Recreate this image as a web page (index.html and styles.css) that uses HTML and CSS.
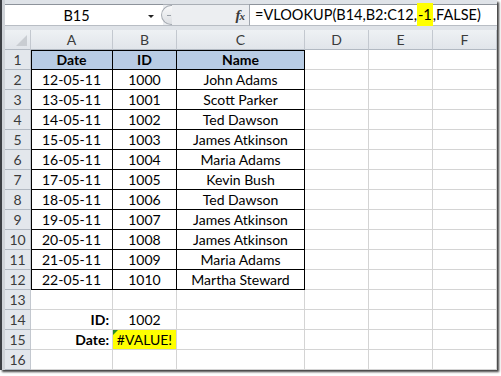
FILE: index.html
```html
<!DOCTYPE html>
<html>
<head>
<meta charset="utf-8">
<link rel="stylesheet" href="styles.css">
</head>
<body>
<div class="window">
  <div class="fbar">
    <div class="namebox"><span class="nb-text">B15</span><span class="nb-arrow"></span></div>
    <div class="pill"><span class="grip"><span class="dash"></span></span><span class="fx"><i>f</i><i class="fx-x">x</i></span></div>
    <div class="formula">=VLOOKUP(B14,B2:C12,<span class="hl">-1</span>,FALSE)</div>
  </div>
  <div class="grid">
    <div class="corner"><span class="tri"></span></div><div class="h">A</div><div class="h">B</div><div class="h">C</div><div class="h">D</div><div class="h">E</div><div class="h">F</div>

    <div class="rh">1</div><div class="c t th ta t1">Date</div><div class="c t th t1">ID</div><div class="c t th t1">Name</div><div class="c"></div><div class="c"></div><div class="c"></div>
    <div class="rh">2</div><div class="c t ta">12-05-11</div><div class="c t">1000</div><div class="c t">John Adams</div><div class="c"></div><div class="c"></div><div class="c"></div>
    <div class="rh">3</div><div class="c t ta">13-05-11</div><div class="c t">1001</div><div class="c t">Scott Parker</div><div class="c"></div><div class="c"></div><div class="c"></div>
    <div class="rh">4</div><div class="c t ta">14-05-11</div><div class="c t">1002</div><div class="c t">Ted Dawson</div><div class="c"></div><div class="c"></div><div class="c"></div>
    <div class="rh">5</div><div class="c t ta">15-05-11</div><div class="c t">1003</div><div class="c t">James Atkinson</div><div class="c"></div><div class="c"></div><div class="c"></div>
    <div class="rh">6</div><div class="c t ta">16-05-11</div><div class="c t">1004</div><div class="c t">Maria Adams</div><div class="c"></div><div class="c"></div><div class="c"></div>
    <div class="rh">7</div><div class="c t ta">17-05-11</div><div class="c t">1005</div><div class="c t">Kevin Bush</div><div class="c"></div><div class="c"></div><div class="c"></div>
    <div class="rh">8</div><div class="c t ta">18-05-11</div><div class="c t">1006</div><div class="c t">Ted Dawson</div><div class="c"></div><div class="c"></div><div class="c"></div>
    <div class="rh">9</div><div class="c t ta">19-05-11</div><div class="c t">1007</div><div class="c t">James Atkinson</div><div class="c"></div><div class="c"></div><div class="c"></div>
    <div class="rh">10</div><div class="c t ta">20-05-11</div><div class="c t">1008</div><div class="c t">James Atkinson</div><div class="c"></div><div class="c"></div><div class="c"></div>
    <div class="rh">11</div><div class="c t ta">21-05-11</div><div class="c t">1009</div><div class="c t">Maria Adams</div><div class="c"></div><div class="c"></div><div class="c"></div>
    <div class="rh">12</div><div class="c t ta">22-05-11</div><div class="c t">1010</div><div class="c t">Martha Steward</div><div class="c"></div><div class="c"></div><div class="c"></div>
    <div class="rh">13</div><div class="c"></div><div class="c"></div><div class="c"></div><div class="c"></div><div class="c"></div><div class="c"></div>
    <div class="rh">14</div><div class="c lbl">ID:</div><div class="c">1002</div><div class="c"></div><div class="c"></div><div class="c"></div><div class="c"></div>
    <div class="rh">15</div><div class="c lbl">Date:</div><div class="c err">#VALUE!</div><div class="c"></div><div class="c"></div><div class="c"></div><div class="c"></div>
    <div class="rh">16</div><div class="c"></div><div class="c"></div><div class="c"></div><div class="c"></div><div class="c"></div><div class="c"></div>
  </div>
</div>
</body>
</html>
```

FILE: styles.css
```css
html, body {
  margin: 0;
  padding: 0;
  background: #ffffff;
}

body {
  width: 501px;
  height: 376px;
  overflow: hidden;
  font-family: Lato, "Open Sans", sans-serif;
  font-size: 14px;
  color: #000;
}

.window {
  width: 497px;
  height: 370px;
  box-sizing: border-box;
  border-left: 2px solid #3c3f44;
  padding-left: 3px;
  background: #cfd3d8;
  box-shadow: 2px 2px 2px rgba(30, 30, 30, 0.85);
  display: flex;
  flex-direction: column;
}

/* formula bar */
.fbar {
  height: 30px;
  box-sizing: border-box;
  padding-top: 4px;
  background: #dfe3e8;
  display: flex;
  align-items: flex-start;
}

.namebox {
  width: 158px;
  height: 22px;
  box-sizing: border-box;
  background: #fff;
  border-top: 1px solid #8d939b;
  border-bottom: 1px solid #b8bdc4;
  display: flex;
  align-items: center;
  position: relative;
}

.nb-text {
  width: 143px;
  text-align: center;
  font-size: 14.5px;
}

.nb-arrow {
  width: 0;
  height: 0;
  border-left: 3px solid transparent;
  border-right: 3px solid transparent;
  border-top: 3px solid #222;
  margin-top: 2px;
}

.pill {
  width: 86px;
  height: 22px;
  box-sizing: border-box;
  background: #eceef1;
  border-top: 1px solid #a9aeb5;
  border-bottom: 1px solid #b8bdc4;
  display: flex;
  align-items: center;
  position: relative;
}

.grip {
  width: 11px;
  height: 20px;
  box-sizing: border-box;
  border-radius: 10px 0 0 10px;
  border: 1px solid #a6abb2;
  border-right: none;
  background: linear-gradient(#f7f8f9, #dcdfe3);
  display: flex;
  align-items: center;
  justify-content: center;
  margin-left: -2px;
}

.dash {
  width: 4px;
  height: 1px;
  background: #9aa0a8;
  margin-left: 3px;
}

.fx {
  margin-left: auto;
  margin-right: 5px;
  font-family: "Liberation Serif", "DejaVu Serif", serif;
  font-size: 15px;
  font-weight: bold;
  color: #3a3a3a;
  letter-spacing: -1px;
}

.fx-x {
  font-size: 11px;
}

.formula {
  flex: 1;
  height: 22px;
  box-sizing: border-box;
  background: #fff;
  border-top: 1px solid #8d939b;
  border-bottom: 1px solid #b8bdc4;
  border-left: 1px solid #a0a6ae;
  padding-left: 5px;
  line-height: 20px;
  font-size: 14.5px;
}

.hl {
  background: #ffff00;
  padding: 3px 1px;
}

/* grid */
.grid {
  display: grid;
  grid-template-columns: 26px 82px 64px 128px 64px 64px 64px;
  grid-auto-rows: 20px;
  background: #fff;
}

.corner, .h, .rh {
  box-sizing: border-box;
  background: linear-gradient(#eef1f4, #e1e5ea);
  border-right: 1px solid #c3c8cf;
  border-bottom: 1px solid #b2b9c2;
  color: #3b3b3b;
  display: flex;
  align-items: center;
  justify-content: center;
}

.corner {
  position: relative;
}

.tri {
  position: absolute;
  right: 3px;
  bottom: 3px;
  width: 0;
  height: 0;
  border-left: 11px solid transparent;
  border-bottom: 11px solid #c9cdd2;
}

.rh {
  background: #e3e7ec;
}

.c {
  box-sizing: border-box;
  border-right: 1px solid #d4d4d4;
  border-bottom: 1px solid #d4d4d4;
  display: flex;
  align-items: center;
  justify-content: center;
  white-space: nowrap;
}

.t {
  border-right-color: #000;
  border-bottom-color: #000;
}

.ta {
  box-shadow: inset 1px 0 0 #000;
}

.t1 {
  box-shadow: inset 0 1px 0 #000;
}

.ta.t1 {
  box-shadow: inset 1px 1px 0 #000;
}

.th {
  background: #b8cce4;
  font-weight: bold;
}

.lbl {
  justify-content: flex-end;
  padding-right: 3px;
  font-weight: bold;
}

.err {
  background: #ffff00;
  position: relative;
}

.err::before {
  content: "";
  position: absolute;
  left: 0;
  top: 0;
  width: 0;
  height: 0;
  border-top: 5px solid #2a8a2a;
  border-right: 5px solid transparent;
}
```
